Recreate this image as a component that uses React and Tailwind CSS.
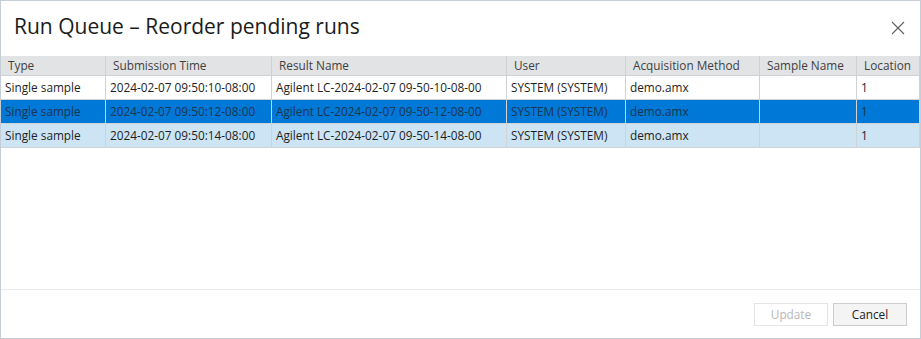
import React from 'react';

const columns = [
  'Type',
  'Submission Time',
  'Result Name',
  'User',
  'Acquisition Method',
  'Sample Name',
  'Location',
];

const runs = [
  { id: 1, time: '2024-02-07 09:50:10-08:00', result: 'Agilent LC-2024-02-07 09-50-10-08-00', state: 'normal' },
  { id: 2, time: '2024-02-07 09:50:12-08:00', result: 'Agilent LC-2024-02-07 09-50-12-08-00', state: 'selected' },
  { id: 3, time: '2024-02-07 09:50:14-08:00', result: 'Agilent LC-2024-02-07 09-50-14-08-00', state: 'hover' },
];

const rowStyles = {
  normal: 'bg-white text-[#1e1e1e]',
  selected: 'bg-[#0078d7] text-[#1d3550]',
  hover: 'bg-[#cce4f3] text-[#1e1e1e]',
};

export default function App() {
  return (
    <div className="w-[921px] h-[339px] bg-white border border-[#c5ced6] flex flex-col font-['Open_Sans',sans-serif]">
      <div className="h-[55px] flex items-center justify-between pl-[13px] pr-[15px]">
        <h1 className="text-[21px] text-[#1b1b1b] pb-[3px]">Run Queue – Reorder pending runs</h1>
        <button className="w-[14px] h-[14px] flex items-center justify-center mb-[2px]">
          <svg width="14" height="14" viewBox="0 0 14 14" fill="none" stroke="#606060" strokeWidth="1.1">
            <path d="M1 1 L13 13 M13 1 L1 13" />
          </svg>
        </button>
      </div>

      <div className="flex-1 border-b border-[#e8eaec]">
        <div className="grid grid-cols-[105px_166px_235px_119px_134px_97px_63px] text-[11.8px]">
          {columns.map((c) => (
            <div
              key={c}
              className="h-[20px] bg-[#e2e3e5] border-r border-b border-[#cfd1d3] pl-[7px] flex items-center text-[#3f3f3f] whitespace-nowrap overflow-hidden"
            >
              {c}
            </div>
          ))}
          {runs.map((r) => {
            const cells = ['Single sample', r.time, r.result, 'SYSTEM (SYSTEM)', 'demo.amx', '', '1'];
            return cells.map((v, i) => (
              <div
                key={r.id + '-' + i}
                className={`h-[24px] border-r border-b border-[#d0d3d6] pl-[4px] flex items-center whitespace-nowrap overflow-hidden ${rowStyles[r.state]}`}
              >
                {v}
              </div>
            ));
          })}
        </div>
      </div>

      <div className="h-[48px] flex justify-end items-start pt-[13px] pr-[13px] gap-[5px] text-[11.8px]">
        <button
          disabled
          className="w-[74px] h-[23px] border border-[#e4e4e4] bg-white text-[#b8b8b8] flex items-center justify-center"
        >
          Update
        </button>
        <button className="w-[74px] h-[23px] border border-[#cccccc] bg-[#f4f4f4] text-[#222] flex items-center justify-center">
          Cancel
        </button>
      </div>
    </div>
  );
}
